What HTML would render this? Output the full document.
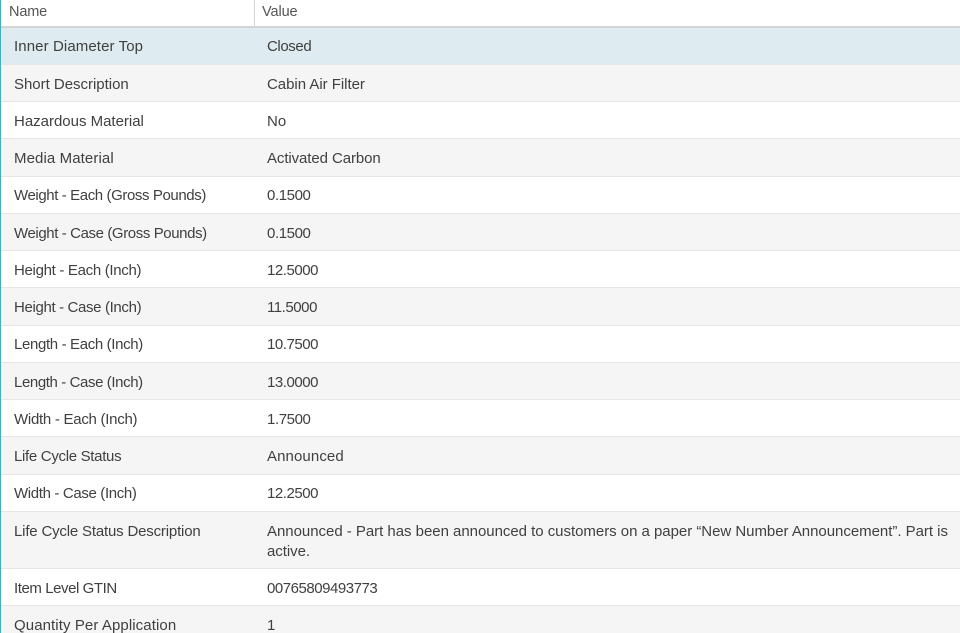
<!DOCTYPE html>
<html style="overflow:hidden;height:633px"><head><meta charset="utf-8"><style>
html,body{margin:0;padding:0;background:#fff}
body{width:960px;height:633px;overflow:hidden;position:relative;font-family:"Liberation Sans",sans-serif;font-size:15px;color:#404040}
.wrap{position:absolute;left:0;top:0;width:960px;height:633px;overflow:hidden}
.r{position:absolute;left:0;width:960px;border-bottom:1px solid #e6e6e6;box-sizing:border-box}
.g{background:#f5f5f5}
.t{position:absolute;white-space:nowrap;line-height:20px}
.n{left:14px}
.v{left:267px}
.bar{position:absolute;left:0;top:0;width:1px;height:633px;background:#3fb1bf;z-index:5}
.h{position:absolute;left:0;top:0;width:960px;height:28px;border-bottom:2px solid #d4d4d4;box-sizing:border-box;background:#fff}
</style></head><body><div class="wrap">
<div class="bar"></div>
<div class="h"></div>
<div style="position:absolute;left:254px;top:0;width:1px;height:26px;background:#d6d6d6"></div>
<div class="t" style="left:9px;top:2px;color:#555;font-size:14.5px;letter-spacing:-.15px">Name</div>
<div class="t" style="left:262px;top:2px;color:#555;font-size:14.5px;letter-spacing:-.1px">Value</div>

<div class="r" style="top:28px;height:37px;background:#deebf0"></div>
<div class="r g" style="top:65px;height:37px"></div>
<div class="r" style="top:102px;height:37px"></div>
<div class="r g" style="top:139px;height:38px"></div>
<div class="r" style="top:177px;height:37px"></div>
<div class="r g" style="top:214px;height:37px"></div>
<div class="r" style="top:251px;height:37px"></div>
<div class="r g" style="top:288px;height:38px"></div>
<div class="r" style="top:326px;height:37px"></div>
<div class="r g" style="top:363px;height:37px"></div>
<div class="r" style="top:400px;height:37px"></div>
<div class="r g" style="top:437px;height:38px"></div>
<div class="r" style="top:475px;height:37px"></div>
<div class="r g" style="top:512px;height:57px"></div>
<div class="r" style="top:569px;height:37px"></div>
<div class="r g" style="top:606px;height:27px;border-bottom:0"></div>

<div class="t n" style="top:37px;letter-spacing:.1px">Inner Diameter Top</div><div class="t v" style="top:37px;letter-spacing:-.4px">Closed</div>
<div class="t n" style="top:75px;letter-spacing:-.02px">Short Description</div><div class="t v" style="top:75px;letter-spacing:-.03px">Cabin Air Filter</div>
<div class="t n" style="top:112px;letter-spacing:-.01px">Hazardous Material</div><div class="t v" style="top:112px;letter-spacing:.1px">No</div>
<div class="t n" style="top:149px;letter-spacing:.1px">Media Material</div><div class="t v" style="top:149px;letter-spacing:-.09px">Activated Carbon</div>
<div class="t n" style="top:186px;letter-spacing:-.4px">Weight - Each (Gross Pounds)</div><div class="t v" style="top:186px;letter-spacing:-.4px">0.1500</div>
<div class="t n" style="top:224px;letter-spacing:-.4px">Weight - Case (Gross Pounds)</div><div class="t v" style="top:224px;letter-spacing:-.4px">0.1500</div>
<div class="t n" style="top:261px;letter-spacing:-.31px">Height - Each (Inch)</div><div class="t v" style="top:261px;letter-spacing:-.45px">12.5000</div>
<div class="t n" style="top:298px;letter-spacing:-.35px">Height - Case (Inch)</div><div class="t v" style="top:298px;letter-spacing:-.45px">11.5000</div>
<div class="t n" style="top:335px;letter-spacing:-.35px">Length - Each (Inch)</div><div class="t v" style="top:335px;letter-spacing:-.45px">10.7500</div>
<div class="t n" style="top:373px;letter-spacing:-.4px">Length - Case (Inch)</div><div class="t v" style="top:373px;letter-spacing:-.45px">13.0000</div>
<div class="t n" style="top:410px;letter-spacing:-.27px">Width - Each (Inch)</div><div class="t v" style="top:410px;letter-spacing:-.4px">1.7500</div>
<div class="t n" style="top:447px;letter-spacing:-.31px">Life Cycle Status</div><div class="t v" style="top:447px;letter-spacing:.1px">Announced</div>
<div class="t n" style="top:484px;letter-spacing:-.35px">Width - Case (Inch)</div><div class="t v" style="top:484px;letter-spacing:-.45px">12.2500</div>
<div class="t n" style="top:522px;letter-spacing:-.18px">Life Cycle Status Description</div>
<div class="t v" style="top:522px;letter-spacing:-.03px">Announced - Part has been announced to customers on a paper “New Number Announcement”. Part is</div>
<div class="t v" style="top:542px;letter-spacing:-.05px">active.</div>
<div class="t n" style="top:579px;letter-spacing:-.43px">Item Level GTIN</div><div class="t v" style="top:579px;letter-spacing:-.47px">00765809493773</div>
<div class="t n" style="top:616px;letter-spacing:.09px">Quantity Per Application</div><div class="t v" style="top:616px">1</div>
</div></body></html>
